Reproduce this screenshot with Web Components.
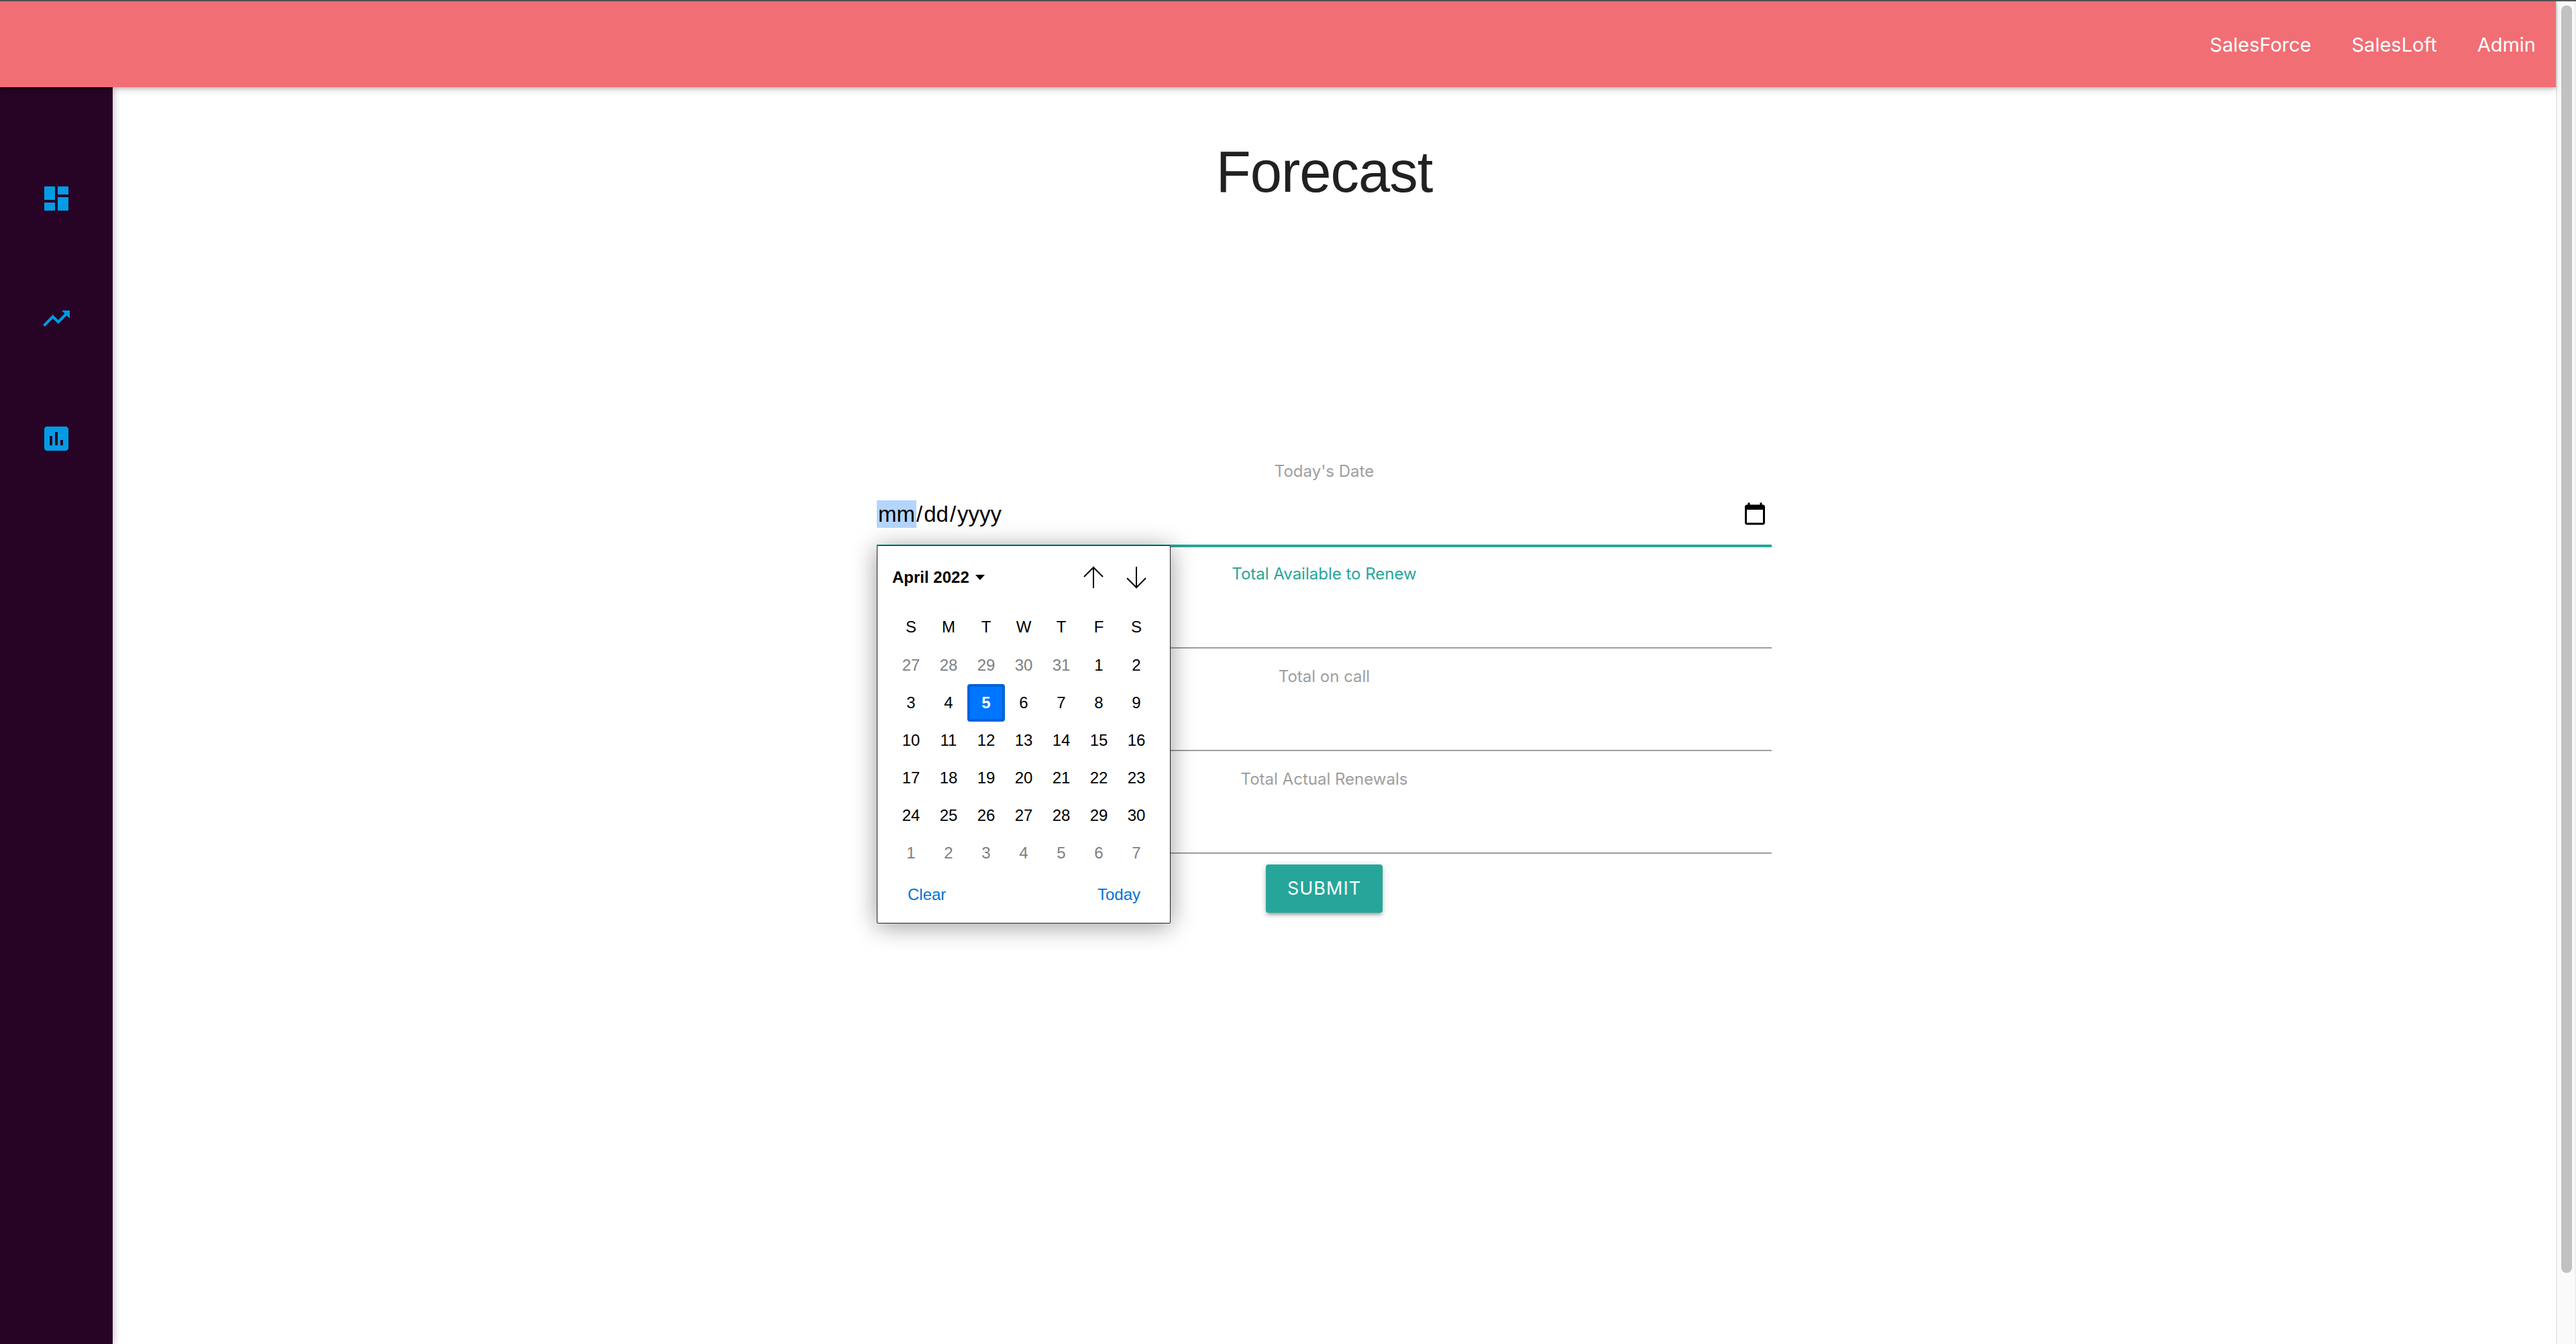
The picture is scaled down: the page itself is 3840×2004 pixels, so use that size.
<!DOCTYPE html>
<html lang="en">
<head>
<meta charset="utf-8">
<title>Forecast</title>
<style>
  html, body { margin: 0; height: 100%; overflow: hidden; background: #fff; }
  body { font-family: Inter, "Liberation Sans", sans-serif; }
</style>
</head>
<body>
<forecast-app>
  <nav-bar slot="nav">
    <a>SalesForce</a>
    <a>SalesLoft</a>
    <a>Admin</a>
  </nav-bar>
  <side-bar slot="side"></side-bar>
  <page-title>Forecast</page-title>
  <forecast-form></forecast-form>
</forecast-app>

<script>
// app shell: dark top line, page column, fake scrollbar
class ForecastApp extends HTMLElement {
    constructor() {
        super();
        this.attachShadow({ mode: 'open' });
        this.shadowRoot.innerHTML = `
            <style>
                :host { display: flex; flex-direction: column; height: 100vh; }
                .topline { height: 2px; background: #555; flex: none; }
                .frame { flex: 1; display: flex; min-height: 0; }
                .page { flex: 1; display: flex; flex-direction: column; min-width: 0; }
                .body { flex: 1; display: flex; min-height: 0; }
                main { flex: 1; padding-right: 30px; display: flex; flex-direction: column; align-items: stretch; }
            </style>
            <div class="topline"></div>
            <div class="frame">
                <div class="page">
                    <slot name="nav"></slot>
                    <div class="body">
                        <slot name="side"></slot>
                        <main><slot></slot></main>
                    </div>
                </div>
                <fake-scrollbar></fake-scrollbar>
            </div>
        `;
    }
}

class FakeScrollbar extends HTMLElement {
    constructor() {
        super();
        this.attachShadow({ mode: 'open' });
        this.shadowRoot.innerHTML = `
            <style>
                :host { display: block; width: 30px; flex: none; box-sizing: border-box; background: #fafafa;
                        border-left: 2px solid #e8e8e8; border-right: 2px solid #f0f0f0; padding: 6px 4px 0 6px; }
                .thumb { width: 16px; height: 1890px; background: #c1c1c1; border-radius: 8px; }
            </style>
            <div class="thumb"></div>
        `;
    }
}

class NavBar extends HTMLElement {
    constructor() {
        super();
        this.attachShadow({ mode: 'open' });
        this.shadowRoot.innerHTML = `
            <style>
                :host { display: flex; justify-content: flex-end; align-items: center; height: 128px; flex: none;
                        background: #f16e74; color: #fff; position: relative; z-index: 3;
                        box-shadow: 0 4px 10px 0 rgba(0,0,0,.16), 0 2px 4px 0 rgba(0,0,0,.14); }
                ::slotted(a) { font: 400 29px Inter, sans-serif; padding: 0 30px; color: #fff; }
            </style>
            <slot></slot>
        `;
    }
}

class SideBar extends HTMLElement {
    constructor() {
        super();
        this.attachShadow({ mode: 'open' });
        this.shadowRoot.innerHTML = `
            <style>
                :host { display: flex; flex-direction: column; align-items: center; width: 168px; flex: none;
                        background: #270425; padding-top: 142px; box-sizing: border-box; gap: 131px;
                        position: relative; z-index: 2; box-shadow: 2px 0 10px rgba(0,0,0,.22); }
                svg { width: 48px; height: 48px; fill: #039be5; display: block; }
            </style>
            <svg viewBox="0 0 24 24"><path d="M3 13h8V3H3v10zm0 8h8v-6H3v6zm10 0h8V11h-8v10zm0-18v6h8V3h-8z"/></svg>
            <svg viewBox="0 0 24 24"><path d="M16 6l2.29 2.29-4.88 4.88-4-4L2 16.59 3.41 18l6-6 4 4 6.3-6.29L22 12V6z"/></svg>
            <svg viewBox="0 0 24 24"><path d="M19 3H5c-1.1 0-2 .9-2 2v14c0 1.1.9 2 2 2h14c1.1 0 2-.9 2-2V5c0-1.1-.9-2-2-2zM9 17H7v-7h2v7zm4 0h-2V7h2v10zm4 0h-2v-4h2v4z"/></svg>
        `;
    }
}

class PageTitle extends HTMLElement {
    constructor() {
        super();
        this.attachShadow({ mode: 'open' });
        this.shadowRoot.innerHTML = `
            <style>
                :host { display: block; text-align: center; flex: none; height: 531px; box-sizing: border-box;
                        padding-top: 71px; font: 400 88px/110px "Liberation Sans", Arial, sans-serif; color: #212121; letter-spacing: -1px; }
                span { display: inline-block; transform: scaleX(.965); }
            </style>
            <span><slot></slot></span>
        `;
    }
}

class FormField extends HTMLElement {
    static get observedAttributes() { return ['label']; }
    constructor() {
        super();
        this.attachShadow({ mode: 'open' });
        this.shadowRoot.innerHTML = `
            <style>
                :host { display: block; height: 153px; box-sizing: border-box; padding-top: 27px; color: #9e9e9e; }
                label { display: block; height: 30px; text-align: center; font: 400 24px/30px Inter, sans-serif; }
                .box { height: 96px; box-sizing: border-box; border-bottom: 2px solid #9e9e9e; display: flex; align-items: center; }
                :host([active-label]) { color: #26a69a; }
                :host([active-line]) .box { border-bottom-color: #26a69a; box-shadow: 0 2px 0 0 #26a69a; }
            </style>
            <label></label>
            <div class="box"><slot></slot></div>
        `;
    }
    attributeChangedCallback(name, oldVal, val) {
        this.shadowRoot.querySelector('label').textContent = val;
    }
}

class DateValue extends HTMLElement {
    constructor() {
        super();
        this.attachShadow({ mode: 'open' });
        this.shadowRoot.innerHTML = `
            <style>
                :host { display: flex; flex: 1; align-items: center; justify-content: space-between; color: #000;
                        font: 400 33px "Liberation Sans", Arial, sans-serif; padding-top: 2px; }
                .seg { padding: 0 2px; height: 41px; line-height: 41px; display: inline-block; }
                .sel { background: #b4d5fe; }
                .txt { display: flex; line-height: 41px; }
                svg { width: 36px; height: 36px; display: block; margin-right: 7px; }
            </style>
            <div class="txt"><span class="seg sel">mm</span><span>/</span><span class="seg">dd</span><span>/</span><span class="seg">yyyy</span></div>
            <svg viewBox="0 0 24 24"><path d="M20 3h-1V1h-2v2H7V1H5v2H4c-1.1 0-2 .9-2 2v16c0 1.1.9 2 2 2h16c1.1 0 2-.9 2-2V5c0-1.1-.9-2-2-2zm0 18H4V8h16v13z"/></svg>
        `;
    }
}

class CalendarPopup extends HTMLElement {
    constructor() {
        super();
        this.attachShadow({ mode: 'open' });
        const days = ['S', 'M', 'T', 'W', 'T', 'F', 'S'];
        const prev = [27, 28, 29, 30, 31];
        let cells = prev.map(d => `<span class="c off">${d}</span>`).join('');
        for (let d = 1; d <= 30; d++) {
            cells += `<span class="c${d === 5 ? ' sel' : ''}">${d}</span>`;
        }
        for (let d = 1; d <= 7; d++) {
            cells += `<span class="c off">${d}</span>`;
        }
        this.shadowRoot.innerHTML = `
            <style>
                :host { display: block; position: absolute; left: 0; top: 152px; width: 438px; height: 564px; box-sizing: border-box;
                        background: #fff; border: 1px solid #222; padding: 1px; border-radius: 2px; z-index: 5; color: #000;
                        font: 400 24px "Liberation Sans", Arial, sans-serif;
                        box-shadow: 0 4px 36px rgba(0,0,0,.4); }
                .head { display: flex; align-items: center; height: 48px; margin-top: 22px; padding-left: 21px; }
                .month { font-weight: 700; }
                .caret { width: 0; height: 0; border: 7px solid transparent; border-top: 8px solid #000; border-bottom: 0; margin-left: 9px; }
                .arrows { margin-left: auto; display: flex; gap: 30px; padding-right: 32px; }
                .arrows svg { width: 34px; height: 34px; display: block; fill: none; stroke: #000; stroke-width: 2; }
                .grid { display: grid; grid-template-columns: repeat(7, 56px); grid-template-rows: 58px; grid-auto-rows: 56px; padding: 0 0 0 21px; margin-top: 21px; }
                .c { display: flex; align-items: center; justify-content: center; box-sizing: border-box; }
                .off { color: #808080; }
                .sel { background: #0075ff; border: 4px solid #0062d6; border-radius: 4px; color: #fff; font-weight: 700; }
                .foot { display: flex; justify-content: space-between; padding: 20px 43px 0 44px; color: #0074d4; }
            </style>
            <div class="head">
                <span class="month">April 2022</span><span class="caret"></span>
                <div class="arrows">
                    <svg viewBox="0 0 34 34"><path d="M17 1v32M3 16L17 2l14 14"/></svg>
                    <svg viewBox="0 0 34 34"><path d="M17 1v32M3 18l14 14 14-14"/></svg>
                </div>
            </div>
            <div class="grid">
                ${days.map(d => `<span class="c">${d}</span>`).join('')}
                ${cells}
            </div>
            <div class="foot"><span>Clear</span><span>Today</span></div>
        `;
    }
}

class ForecastForm extends HTMLElement {
    constructor() {
        super();
        this.attachShadow({ mode: 'open' });
        this.shadowRoot.innerHTML = `
            <style>
                :host { display: block; width: 1334px; margin: 0 auto; position: relative; }
                .actions { display: flex; justify-content: center; padding-top: 16px; }
                button { all: unset; box-sizing: border-box; height: 72px; padding: 0 32px; background: #26a69a; color: #fff; border-radius: 4px;
                         font: 400 27px/72px Inter, sans-serif; letter-spacing: 1px; text-transform: uppercase;
                         box-shadow: 0 4px 4px 0 rgba(0,0,0,.14), 0 6px 2px -4px rgba(0,0,0,.12), 0 2px 10px 0 rgba(0,0,0,.2); }
            </style>
            <form-field label="Today's Date" active-line><date-value></date-value></form-field>
            <calendar-popup></calendar-popup>
            <form-field label="Total Available to Renew" active-label></form-field>
            <form-field label="Total on call"></form-field>
            <form-field label="Total Actual Renewals"></form-field>
            <div class="actions"><button>Submit</button></div>
        `;
    }
}

customElements.define('forecast-app', ForecastApp);
customElements.define('fake-scrollbar', FakeScrollbar);
customElements.define('nav-bar', NavBar);
customElements.define('side-bar', SideBar);
customElements.define('page-title', PageTitle);
customElements.define('form-field', FormField);
customElements.define('date-value', DateValue);
customElements.define('calendar-popup', CalendarPopup);
customElements.define('forecast-form', ForecastForm);
</script>
</body>
</html>
